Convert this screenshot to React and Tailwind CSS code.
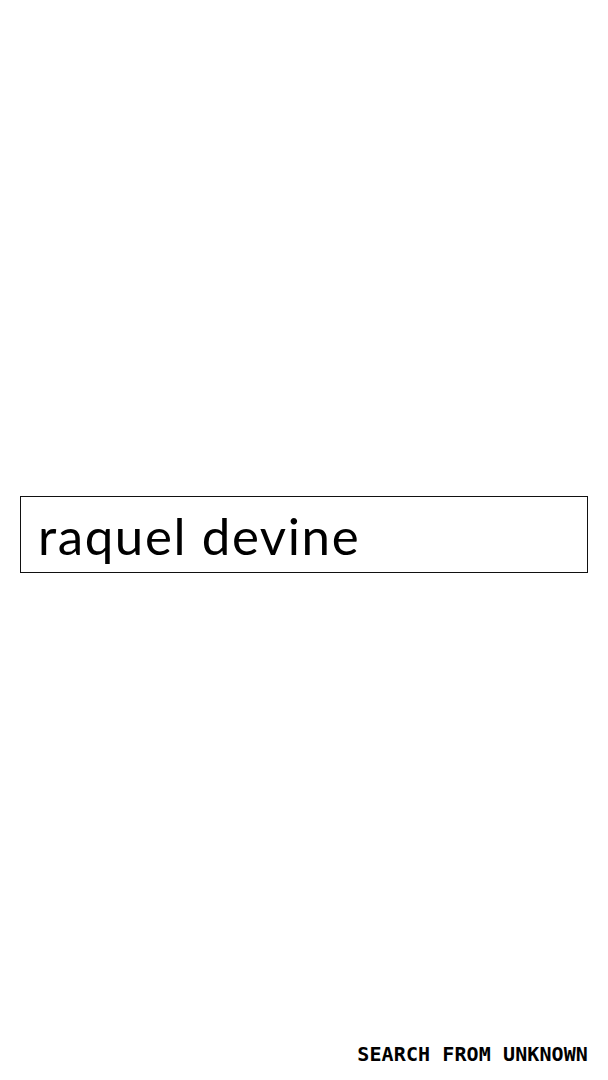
import React, { useState } from 'react';

const App = () => {
  const [query, setQuery] = useState('raquel devine');

  return (
    <div className="h-screen w-full bg-white flex flex-col">
      {/* Search field */}
      <main className="flex-1 flex items-center px-5 pt-[26px]">
        <input
          type="text"
          value={query}
          onChange={(e) => setQuery(e.target.value)}
          className="w-full h-[77px] border border-[#111] bg-white px-[17px] pt-[3px] text-[51px] tracking-[1.6px] text-black outline-none"
          style={{ fontFamily: 'Lato, sans-serif' }}
        />
      </main>

      {/* Footer */}
      <footer className="flex justify-end pl-5 pr-[20px] pb-[14px]">
        <span className="text-[20px] font-bold tracking-[0.1px] text-black leading-6 font-['DejaVu_Sans_Mono',monospace]">
          SEARCH FROM UNKNOWN
        </span>
      </footer>
    </div>
  );
};

export default App;
